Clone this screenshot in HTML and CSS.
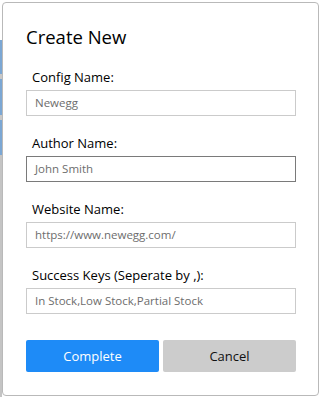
FILE: index.html
```html
<!DOCTYPE html>
<html>
<head>
<meta charset="utf-8">
<link rel="stylesheet" href="styles.css">
</head>
<body>
<div class="modal">
  <h1 class="title">Create New</h1>
  <div class="field">
    <label class="label">Config Name:</label>
    <div class="input">Newegg</div>
  </div>
  <div class="field">
    <label class="label">Author Name:</label>
    <div class="input focused">John Smith</div>
  </div>
  <div class="field">
    <label class="label">Website Name:</label>
    <div class="input">https://www.newegg.com/</div>
  </div>
  <div class="field">
    <label class="label">Success Keys (Seperate by ,):</label>
    <div class="input">In Stock,Low Stock,Partial Stock</div>
  </div>
  <div class="actions">
    <button class="btn primary">Complete</button>
    <button class="btn secondary">Cancel</button>
  </div>
</div>
</body>
</html>
```
FILE: styles.css
```css
html, body {
  margin: 0;
  padding: 0;
}
body {
  width: 320px;
  height: 397px;
  overflow: hidden;
  font-family: "Open Sans", "Noto Sans", sans-serif;
  color: #000;
  background-color: #fff;
  background-image: linear-gradient(to bottom,
    #fff 0, #fff 40px,
    #7ba7d4 40px, #7ba7d4 74px,
    #c8c8c8 74px, #c8c8c8 79px,
    #7ba7d4 79px, #7ba7d4 115px,
    #c8c8c8 115px, #c8c8c8 120px,
    #7ba7d4 120px, #7ba7d4 155px,
    #c4c4c4 155px, #c4c4c4 397px);
  background-size: 2px 100%;
  background-repeat: no-repeat;
  box-sizing: border-box;
  padding: 2px 1px 1px 2px;
}
.modal {
  box-sizing: border-box;
  height: 394px;
  background: #fff;
  border: 1px solid #b9b9b9;
  border-radius: 4px;
  padding: 0 22px 0 23px;
  display: flex;
  flex-direction: column;
}
.title {
  margin: 21px 0 0 0;
  font-size: 18.5px;
  font-weight: 400;
  line-height: 26px;
  height: 26px;
}
.field {
  display: flex;
  flex-direction: column;
}
.field:first-of-type {
  margin-top: 17px;
}
.field + .field {
  margin-top: 17px;
}
.label {
  font-size: 13px;
  line-height: 20px;
  height: 20px;
  padding-left: 6px;
  margin-bottom: 3px;
}
.input {
  box-sizing: border-box;
  height: 26px;
  border: 1px solid #cbcbcb;
  padding: 0 8px;
  font-size: 11.5px;
  line-height: 24px;
  color: #6d6d6d;
  white-space: nowrap;
}
.input.focused {
  border-color: #7a7a7a;
}
.actions {
  margin-top: 26px;
  display: flex;
  gap: 4px;
}
.btn {
  flex: 1;
  height: 32px;
  border: 0;
  border-radius: 2px;
  font-family: "Open Sans", "Noto Sans", sans-serif;
  font-size: 13px;
  padding: 0;
}
.primary {
  background: #1e8bf7;
  color: #fff;
}
.secondary {
  background: #cccccc;
  color: #111;
}
```
